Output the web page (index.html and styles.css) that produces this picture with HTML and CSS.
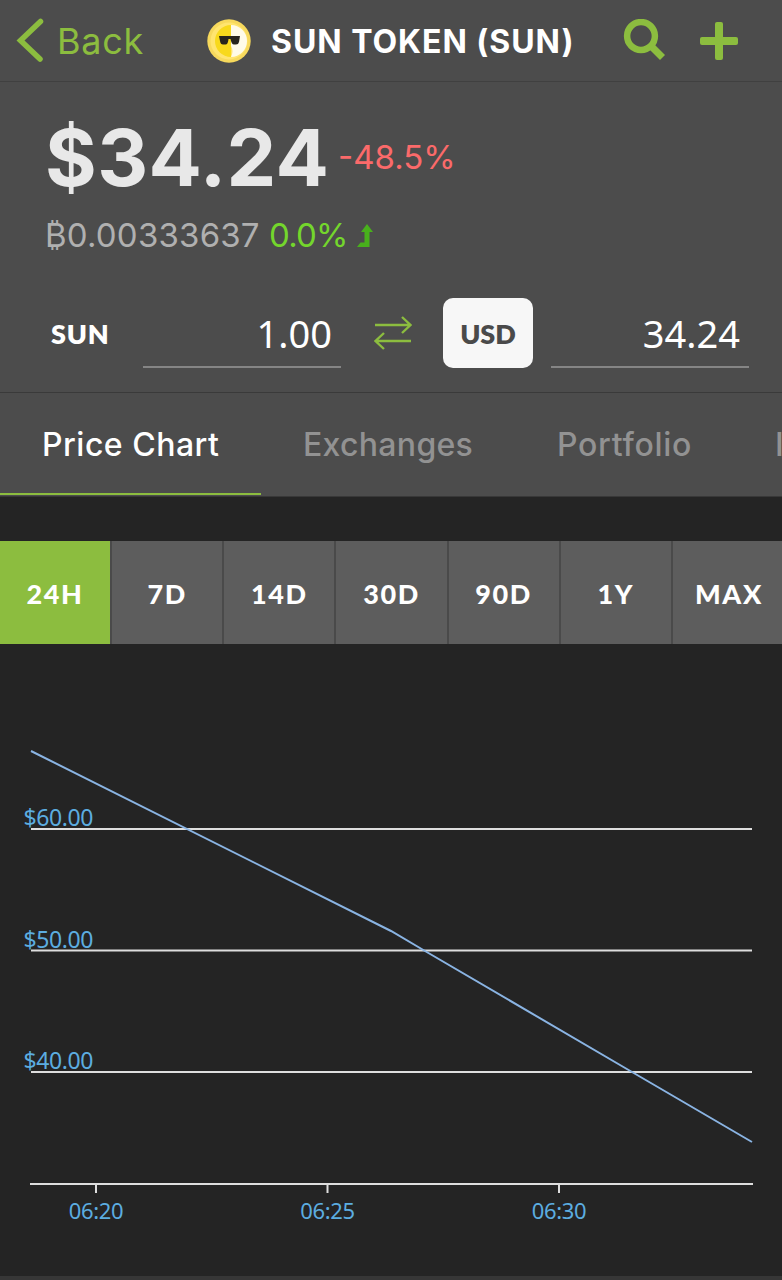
FILE: index.html
```html
<!DOCTYPE html>
<html lang="en">
<head>
  <meta charset="utf-8">
  <title>SUN TOKEN (SUN)</title>
  <link rel="stylesheet" href="styles.css">
</head>
<body>

  <!-- TOP BAR -->
  <header class="topbar">
    <a class="back">
      <svg width="28" height="46" viewBox="0 0 28 46"><path d="M24.500 3.500 L4.500 22.500 L24 41" /></svg>
      <span>Back</span>
    </a>
    <svg class="coin" width="44" height="44" viewBox="0 0 44 44">
      <circle cx="22" cy="22" r="21.700" fill="#f7d95c" />
      <circle cx="22" cy="22" r="18.500" fill="#ffe570" />
      <path d="M24 6 A16 16 0 1 0 24 38 Z" fill="#f8d91c" />
      <path d="M24 6 A16 16 0 0 1 24 38 C26 34 26 30 24 27 Z" fill="#fffbe8" />
      <path d="M12 17 H33 L32 23 Q31.500 25.500 29 25.500 H27 Q24.500 25.500 23.500 20 H21.500 Q21 25.500 18.500 25.500 H16 Q13.500 25.500 13 22 Z" fill="#28251d" />
    </svg>
    <h1 class="title">SUN TOKEN (SUN)</h1>
    <svg class="search" width="44" height="44" viewBox="0 0 44 44">
      <circle cx="18" cy="17" r="13.900" />
      <path d="M28 27 L39.500 38.500" />
    </svg>
    <svg class="plus" width="38" height="38" viewBox="0 0 38 38">
      <rect x="15" y="0" width="8" height="38" rx="2" />
      <rect x="0" y="15" width="38" height="8" rx="2" />
    </svg>
  </header>

  <!-- PRICE AND CONVERTER -->
  <section class="summary">
    <div class="price-row">
      <span class="price">$34.24</span>
      <span class="change">-48.5%</span>
    </div>
    <div class="btc-row">
      <span class="btc">₿0.00333637</span>
      <span class="btc-change">0.0%</span>
      <svg width="16" height="25" viewBox="0 0 16 25"><path d="M10 1 L16 9 H12.500 V24 H0 L3.500 19.500 H7.500 V9 H4 Z" fill="#48b01c" /></svg>
    </div>
    <div class="converter">
      <span class="coin-code">SUN</span>
      <div class="amount">1.00</div>
      <svg class="swap" width="38" height="34" viewBox="0 0 38 34">
        <path d="M1 9 H36 M28 1 L36.500 9 L28 17" />
        <path d="M37 25 H2 M10 17 L1.500 25 L10 33" />
      </svg>
      <button class="currency">USD</button>
      <div class="amount">34.24</div>
    </div>
  </section>

  <!-- TABS -->
  <nav class="tabs">
    <a class="tab active">Price Chart</a>
    <a class="tab exchanges">Exchanges</a>
    <a class="tab portfolio">Portfolio</a>
    <a class="tab">I</a>
  </nav>

  <!-- TIME RANGES -->
  <div class="ranges">
    <div class="range selected">24H</div>
    <div class="range">7D</div>
    <div class="range">14D</div>
    <div class="range">30D</div>
    <div class="range">90D</div>
    <div class="range">1Y</div>
    <div class="range">MAX</div>
  </div>

  <!-- CHART -->
  <svg class="chart" width="782" height="632" viewBox="0 644 782 632">
    <g class="grid">
      <path d="M31 829 H752" />
      <path d="M31 950.500 H752" />
      <path d="M31 1072 H752" />
      <path d="M30 1184 H753" />
      <path d="M96 1184 V1193" />
      <path d="M327.500 1184 V1193" />
      <path d="M559 1184 V1193" />
    </g>
    <path class="line" d="M31 751 L391 931 L425 951 L632 1072 L752 1142" />
    <g class="y-labels">
      <text x="23.500" y="826">$60.00</text>
      <text x="23.500" y="947.500">$50.00</text>
      <text x="23.500" y="1069">$40.00</text>
    </g>
    <g class="x-labels">
      <text x="96" y="1219">06:20</text>
      <text x="327.500" y="1219">06:25</text>
      <text x="559" y="1219">06:30</text>
    </g>
  </svg>
  <footer class="bottom"></footer>

</body>
</html>
```

FILE: styles.css
```css
* {
  box-sizing: border-box;
}
body {
  margin: 0;
  width: 782px;
  height: 1280px;
  overflow: hidden;
  background-color: #242424;
  font-family: Inter, "Liberation Sans", sans-serif;
  color: white;
}
svg {
  display: block;
  flex: none;
}
/* Top bar */
.topbar {
  display: flex;
  align-items: center;
  height: 82px;
  padding-left: 16px;
  background-color: #4c4c4c;
  border-bottom: 1px solid #404040;
}
.back {
  display: flex;
  align-items: center;
  width: 191px;
  color: #8cbd3f;
  font-size: 36px;
  letter-spacing: 0.7px;
  white-space: nowrap;
}
.back span {
  margin-left: 13px;
}
.back path {
  fill: none;
  stroke: #8cbd3f;
  stroke-width: 5.5;
  stroke-linecap: round;
}
.title {
  width: 372px;
  margin: 0;
  padding: 2px 0 0 20px;
  font-size: 32px;
  font-weight: 700;
  letter-spacing: 0.95px;
  white-space: nowrap;
}
.search {
  fill: none;
  stroke: #8cbd3f;
  stroke-width: 6.5;
}
.search path {
  stroke-width: 7;
}
.plus {
  margin-left: 33px;
  fill: #8cbd3f;
}
/* Price */
.summary {
  height: 311px;
  padding-top: 27px;
  background-color: #4c4c4c;
  border-bottom: 1px solid #3a3a3a;
}
.price-row {
  display: flex;
  align-items: center;
  height: 96px;
  padding-left: 45px;
}
.price {
  width: 293px;
  color: #e8e8e8;
  font-size: 79px;
  font-weight: 650;
  letter-spacing: 0.4px;
}
.change {
  color: #fb6a6a;
  font-size: 33px;
}
.btc-row {
  display: flex;
  align-items: center;
  height: 60px;
  padding-left: 45px;
  font-size: 33px;
}
.btc {
  width: 224px;
  color: #b0b0b0;
  letter-spacing: 0.2px;
}
.btc-change {
  width: 88px;
  color: #74d62c;
  letter-spacing: -0.8px;
}
/* Converter */
.converter {
  display: flex;
  align-items: center;
  height: 70px;
  margin-top: 33px;
  padding-left: 51px;
}
.coin-code {
  width: 92px;
  font-family: Lato, sans-serif;
  font-size: 27px;
  font-weight: 800;
  letter-spacing: 0.8px;
}
.amount {
  width: 198px;
  height: 70px;
  padding-right: 9px;
  border-bottom: 2px solid #858585;
  font-family: "Noto Sans", sans-serif;
  font-size: 38px;
  line-height: 71px;
  text-align: right;
}
.swap {
  margin: 0 31px 0 33px;
  fill: none;
  stroke: #8cbd3f;
  stroke-width: 2.4;
}
.currency {
  width: 90px;
  height: 70px;
  margin-right: 18px;
  padding: 0;
  border: none;
  border-radius: 10px;
  background-color: #f7f7f7;
  color: #4a4a4a;
  font-family: Lato, sans-serif;
  font-size: 27px;
  font-weight: 800;
}
/* Tabs */
.tabs {
  display: flex;
  height: 104px;
  overflow: hidden;
  background-color: #4c4c4c;
  border-bottom: 1px solid #383838;
}
.tab {
  flex: none;
  height: 102px;
  padding-left: 42px;
  color: #929292;
  font-size: 32px;
  font-weight: 450;
  letter-spacing: 0.5px;
  line-height: 103px;
}
.tab.active {
  width: 261px;
  color: white;
  border-bottom: 2px solid #8cbd3f;
}
.exchanges {
  width: 254px;
  letter-spacing: 0.3px;
}
.portfolio {
  width: 218px;
  letter-spacing: 0.7px;
}
/* Time ranges */
.ranges {
  display: grid;
  grid-template-columns: 112px repeat(5, 112.2px) 1fr;
  height: 103px;
  margin-top: 44px;
}
.range {
  height: 103px;
  background-color: #5d5d5d;
  border-right: 2px solid #4a4a4a;
  font-family: Lato, sans-serif;
  font-size: 27px;
  font-weight: 900;
  letter-spacing: 1.6px;
  line-height: 105px;
  text-align: center;
}
.range.selected {
  background-color: #8cbd3f;
}
.range:last-child {
  padding-left: 3px;
  border-right: none;
}
/* Chart */
.chart {
  font-family: "Noto Sans", sans-serif;
  font-size: 23px;
}
.grid path {
  stroke: #dedede;
  stroke-width: 2;
}
.line {
  fill: none;
  stroke: #8ab4e3;
  stroke-width: 2;
}
.y-labels, .x-labels {
  fill: #5cade0;
}
.y-labels {
  letter-spacing: -0.4px;
}
.x-labels {
  font-size: 22px;
  letter-spacing: -0.3px;
  text-anchor: middle;
}
.bottom {
  height: 4px;
  background-color: #363636;
}
```
